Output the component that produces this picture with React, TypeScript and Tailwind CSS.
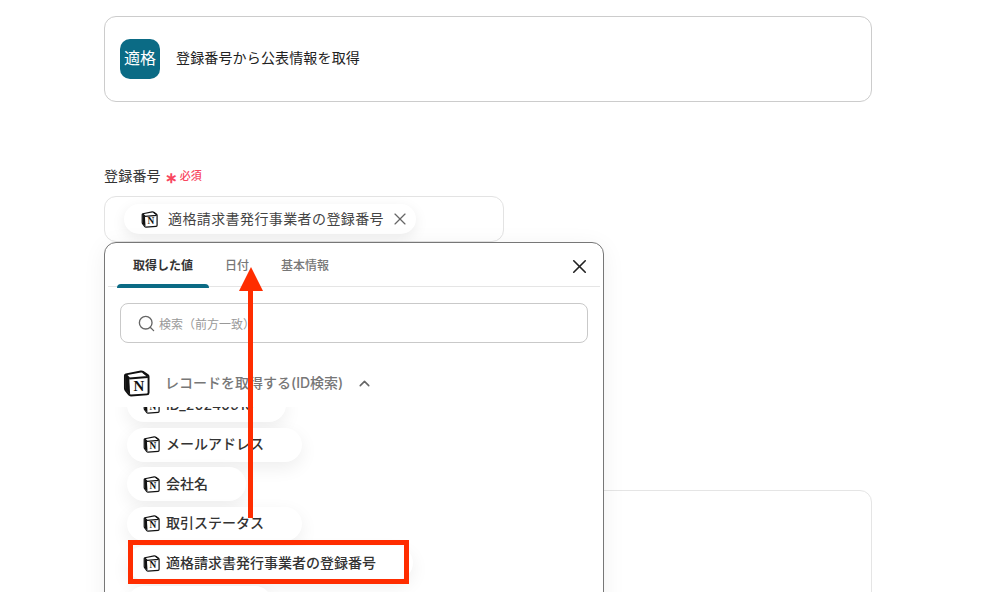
import { ChevronUp, Search, X } from "lucide-react";

const FONT = "font-['Inter','Noto_Sans_CJK_JP',sans-serif]";

function NotionLogo({ size }: { size: number }) {
  return (
    <svg width={size} height={size} viewBox="0 0 28 28" className="shrink-0">
      <path
        d="M3 4.5 L18.5 1.5 Q20 1.4 21 2.1 L25.6 5.3 Q26.5 6 26.5 7 L26.5 23.6 Q26.5 25.2 24.9 25.3 L8.2 26.4 Q7 26.4 6.3 25.6 L2.6 20.8 Q2 20 2 19 L2 5.8 Q2 4.8 3 4.5 Z"
        fill="#fff"
        stroke="#111"
        strokeWidth="2"
        strokeLinejoin="round"
      />
      <path d="M2.5 5 L6.5 8.6 L7.4 25.6 L3 20.4 Z" fill="#111" />
      <path d="M6.5 8.8 L25.8 7.2 M20.5 2 L25.8 6.4 M3 4.8 L6.6 8.6" stroke="#111" strokeWidth="2" fill="none" />
      <text x="16.5" y="22" textAnchor="middle" fontSize="15.5" fontWeight="700" fontFamily="'Liberation Serif', serif" fill="#111">
        N
      </text>
    </svg>
  );
}

function FieldChip({ label, width }: { label: string; width: string }) {
  return (
    <div className={`flex h-[34px] ${width} shrink-0 items-center gap-[6px] rounded-full bg-white pl-4 shadow-[0_6px_18px_rgba(0,0,0,0.07)]`}>
      <NotionLogo size={17} />
      <span className="-mt-[2px] text-[14px] font-medium whitespace-nowrap text-[#333]">{label}</span>
    </div>
  );
}

export default function App() {
  return (
    <div className={`relative h-[592px] w-[984px] overflow-hidden bg-white ${FONT}`}>
      <div className="ml-[104px] flex w-[768px] flex-col pt-4">
        <div className="flex h-[86px] items-center gap-4 rounded-xl border border-[#cccccc] px-[15px]">
          <div className="flex h-10 w-10 items-center justify-center rounded-[10px] bg-[#0b6b85] pb-[2px] text-[16px] text-white">
            適格
          </div>
          <span className="pb-[3px] text-[14px] tracking-[0.15px] text-[#222]">登録番号から公表情報を取得</span>
        </div>

        <div className="mt-[65px] flex h-5 items-center gap-[4px]">
          <span className="pb-1 text-[14px] tracking-[0.2px] text-[#333]">登録番号</span>
          <span className="flex items-center gap-[2px] text-[11px] font-medium text-[#f8475f]">
            <span className="text-[15px] leading-none font-bold">∗</span>
            <span className="pb-[2px]">必須</span>
          </span>
        </div>

        <div className="relative mt-[9px] h-[46px] w-[400px] rounded-xl border border-[#e3e3e3] px-[19px] pt-[7px]">
          <div className="flex h-[30px] w-[292px] items-center rounded-full bg-white pl-[17px] shadow-[0_4px_14px_rgba(0,0,0,0.08)]">
            <NotionLogo size={17} />
            <span className="mb-[2px] ml-[10px] text-[14px] tracking-[0.4px] whitespace-nowrap text-[#444]">適格請求書発行事業者の登録番号</span>
            <X size={20} strokeWidth={1.4} className="ml-[6px] text-[#666]" />
          </div>
        </div>

        <div className="mt-[248px] h-40 rounded-xl border border-[#e5e5e5]" />
      </div>

      {/* dropdown over the form */}
      <div className="absolute top-[242px] left-[104px] h-[400px] w-[500px] rounded-xl border border-[#777777] bg-white shadow-[0_4px_24px_rgba(0,0,0,0.06)]">
        <div className="mx-[3px] flex h-[44px] items-start border-b border-[#e5e5e5] pl-[9px]">
          <div className="relative flex h-[44px] w-[92px] items-center justify-center text-[12px] font-semibold text-[#333]">
            <span className="pt-[2px]">取得した値</span>
            <div className="absolute right-0 bottom-[-1px] left-0 h-1 rounded-t-md bg-[#0b6b85]" />
          </div>
          <div className="flex h-[44px] items-center pl-4 text-[12px] font-medium text-[#777]">
            <span className="pt-[2px]">日付</span>
          </div>
          <div className="flex h-[44px] items-center pl-[32px] text-[12px] font-medium text-[#777]">
            <span className="pt-[2px]">基本情報</span>
          </div>
          <X size={23} strokeWidth={1.7} className="mt-[12px] mr-[9px] ml-auto text-[#222]" />
        </div>

        <div className="mx-[15px] mt-4 flex h-10 items-center rounded-lg border border-[#c9c9c9] pl-[16px]">
          <Search size={19} strokeWidth={1.7} className="text-[#666]" />
          <span className="ml-[3px] pt-[3px] text-[12px] text-[#999]">検索（前方一致）</span>
        </div>

        <div className="mt-[25px] flex h-[30px] items-center pl-[18px]">
          <NotionLogo size={27} />
          <span className="mb-[2px] ml-[15px] text-[14px] font-medium text-[#777]">レコードを取得する(ID検索)</span>
          <ChevronUp size={17} strokeWidth={2.2} className="ml-[13px] text-[#666]" />
        </div>

        <div className="mt-[9px] h-[300px] overflow-hidden pl-[22px]">
          <div className="-mt-[19px] flex flex-col gap-[5.5px] pb-6">
            <FieldChip label="ID_20240916" width="w-[159px]" />
            <FieldChip label="メールアドレス" width="w-[175px]" />
            <FieldChip label="会社名" width="w-[119px]" />
            <FieldChip label="取引ステータス" width="w-[175px]" />
            <FieldChip label="適格請求書発行事業者の登録番号" width="w-[286px]" />
            <FieldChip label="" width="w-[145px]" />
          </div>
        </div>
      </div>

      {/* red annotations */}
      <div className="absolute top-[267px] left-[239px] h-0 w-0 border-x-[12.5px] border-b-[24px] border-x-transparent border-b-[#ff2d00]" />
      <div className="absolute top-[290px] left-[248px] h-[228px] w-[5px] bg-[#ff2d00]" />
      <div className="absolute top-[540px] left-[128px] h-[44px] w-[281px] border-[5px] border-[#ff2d00]" />
    </div>
  );
}
